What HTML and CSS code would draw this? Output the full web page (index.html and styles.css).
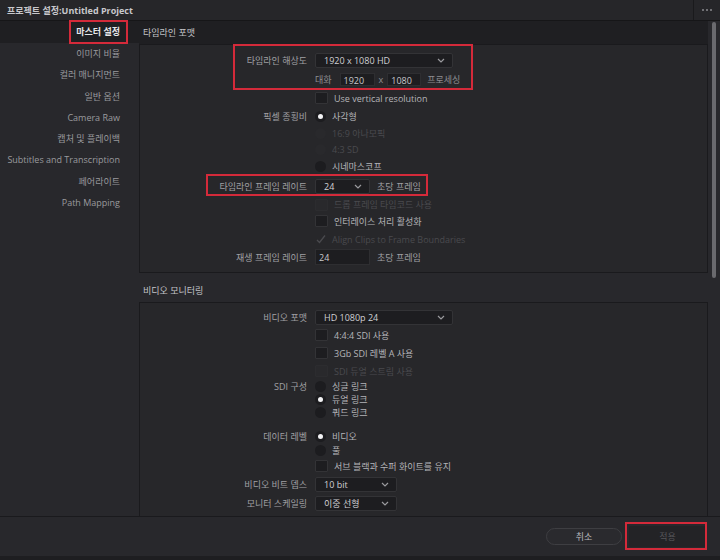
FILE: index.html
```html
<!DOCTYPE html>
<html lang="ko">

<head>
    <meta charset="UTF-8">
    <title>프로젝트 설정</title>
    <link rel="stylesheet" href="styles.css">
</head>

<body>
    <div class="win">
        <div class="titlebar">
            <span class="title">프로젝트 설정:Untitled Project</span>
            <span class="more"><i></i><i></i><i></i></span>
        </div>

        <div class="main">
            <nav class="side">
                <div class="nav-item sel">마스터 설정</div>
                <div class="nav-item">이미지 비율</div>
                <div class="nav-item">컬러 매니지먼트</div>
                <div class="nav-item">일반 옵션</div>
                <div class="nav-item">Camera Raw</div>
                <div class="nav-item">캡처 및 플레이백</div>
                <div class="nav-item">Subtitles and Transcription</div>
                <div class="nav-item">페어라이트</div>
                <div class="nav-item">Path Mapping</div>
            </nav>

            <div class="content">
                <div class="scroll">
                    <div class="sec-head first">타임라인 포맷</div>
                    <div class="box box1">
                        <div class="row h18">
                            <span class="lbl">타임라인 해상도</span>
                            <div class="select w138"><span>1920 x 1080 HD</span><svg width="8" height="5" viewBox="0 0 8 5"><polyline points="1,1 4,4 7,1" fill="none" stroke="#9a9a9e" stroke-width="1.2"/></svg></div>
                        </div>
                        <div class="row h20">
                            <span class="lbl"></span>
                            <span class="dim-lbl">대화</span>
                            <span class="field w35">1920</span>
                            <span class="times">x</span>
                            <span class="field w34">1080</span>
                            <span class="dim-lbl">프로세싱</span>
                        </div>
                        <div class="row h18">
                            <span class="lbl"></span>
                            <span class="check"></span><span class="txt">Use vertical resolution</span>
                        </div>
                        <div class="row h18">
                            <span class="lbl">픽셀 종횡비</span>
                            <span class="radio on"></span><span class="txt">사각형</span>
                        </div>
                        <div class="row h16">
                            <span class="lbl"></span>
                            <span class="radio off"></span><span class="txt off">16:9 아나모픽</span>
                        </div>
                        <div class="row h16">
                            <span class="lbl"></span>
                            <span class="radio off"></span><span class="txt off">4:3 SD</span>
                        </div>
                        <div class="row h18">
                            <span class="lbl"></span>
                            <span class="radio"></span><span class="txt">시네마스코프</span>
                        </div>
                        <div class="row h22">
                            <span class="lbl">타임라인 프레임 레이트</span>
                            <div class="select w55"><span>24</span><svg width="8" height="5" viewBox="0 0 8 5"><polyline points="1,1 4,4 7,1" fill="none" stroke="#9a9a9e" stroke-width="1.2"/></svg></div>
                            <span class="unit">초당 프레임</span>
                        </div>
                        <div class="row h15">
                            <span class="lbl"></span>
                            <span class="check off"></span><span class="txt off">드롭 프레임 타임코드 사용</span>
                        </div>
                        <div class="row h18">
                            <span class="lbl"></span>
                            <span class="check"></span><span class="txt">인터레이스 처리 활성화</span>
                        </div>
                        <div class="row h18">
                            <span class="lbl"></span>
                            <span class="tick"><svg width="12" height="10" viewBox="0 0 12 10"><polyline points="2,6 4.5,8.5 10,1.5" fill="none" stroke="#4a4a4e" stroke-width="1.3"/></svg></span><span class="txt off">Align Clips to Frame Boundaries</span>
                        </div>
                        <div class="row h18">
                            <span class="lbl">재생 프레임 레이트</span>
                            <span class="field w55 tall">24</span>
                            <span class="unit">초당 프레임</span>
                        </div>
                    </div>

                    <div class="sec-head">비디오 모니터링</div>
                    <div class="box box2">
                        <div class="row h18">
                            <span class="lbl">비디오 포맷</span>
                            <div class="select w138"><span>HD 1080p 24</span><svg width="8" height="5" viewBox="0 0 8 5"><polyline points="1,1 4,4 7,1" fill="none" stroke="#9a9a9e" stroke-width="1.2"/></svg></div>
                        </div>
                        <div class="row h18">
                            <span class="lbl"></span>
                            <span class="check"></span><span class="txt">4:4:4 SDI 사용</span>
                        </div>
                        <div class="row h18">
                            <span class="lbl"></span>
                            <span class="check"></span><span class="txt">3Gb SDI 레벨 A 사용</span>
                        </div>
                        <div class="row h18">
                            <span class="lbl"></span>
                            <span class="check off"></span><span class="txt off">SDI 듀얼 스트림 사용</span>
                        </div>
                        <div class="row h13">
                            <span class="lbl">SDI 구성</span>
                            <span class="radio"></span><span class="txt">싱글 링크</span>
                        </div>
                        <div class="row h13">
                            <span class="lbl"></span>
                            <span class="radio on"></span><span class="txt">듀얼 링크</span>
                        </div>
                        <div class="row h12">
                            <span class="lbl"></span>
                            <span class="radio"></span><span class="txt">쿼드 링크</span>
                        </div>
                        <div class="row h14 gap-top">
                            <span class="lbl">데이터 레벨</span>
                            <span class="radio on"></span><span class="txt">비디오</span>
                        </div>
                        <div class="row h14">
                            <span class="lbl"></span>
                            <span class="radio"></span><span class="txt">풀</span>
                        </div>
                        <div class="row h18">
                            <span class="lbl"></span>
                            <span class="check"></span><span class="txt">서브 블랙과 수퍼 화이트를 유지</span>
                        </div>
                        <div class="row h19">
                            <span class="lbl">비디오 비트 뎁스</span>
                            <div class="select w82"><span>10 bit</span><svg width="8" height="5" viewBox="0 0 8 5"><polyline points="1,1 4,4 7,1" fill="none" stroke="#9a9a9e" stroke-width="1.2"/></svg></div>
                        </div>
                        <div class="row h19">
                            <span class="lbl">모니터 스케일링</span>
                            <div class="select w82"><span>이중 선형</span><svg width="8" height="5" viewBox="0 0 8 5"><polyline points="1,1 4,4 7,1" fill="none" stroke="#9a9a9e" stroke-width="1.2"/></svg></div>
                        </div>
                        <div class="row h18 hidden-row">
                            <span class="lbl"></span>
                            <span class="radio"></span>
                        </div>
                    </div>
                </div>
                <div class="vbar"><div class="thumb"></div></div>
            </div>
        </div>

        <div class="footer">
            <button class="btn">취소</button>
            <button class="btn apply">적용</button>
        </div>

        <!-- red highlight boxes drawn over the screenshot -->
        <div class="mark m-nav"></div>
        <div class="mark m-res"></div>
        <div class="mark m-fps"></div>
        <div class="mark m-apply"></div>
    </div>
</body>

</html>
```

FILE: styles.css
```css
body {
    margin: 0;
    padding: 0;
    background-color: #28282c;
    font-family: "Open Sans", "Noto Sans CJK KR", sans-serif;
    font-size: 9px;
    color: #a0a0a4;
}

.win {
    position: relative;
    width: 720px;
    height: 560px;
    overflow: hidden;
    display: flex;
    flex-direction: column;
}

/* title bar */
.titlebar {
    height: 20px;
    display: flex;
    align-items: center;
    background-color: #262629;
    border-bottom: 1px solid #161618;
}

.title {
    flex: 1;
    padding-left: 7px;
    font-weight: 700;
    color: #c8c8cc;
}

.more {
    width: 26px;
    height: 20px;
    display: flex;
    align-items: center;
    justify-content: center;
    gap: 2px;
    border-left: 1px solid #1a1a1c;
}

.more i {
    width: 2px;
    height: 2px;
    border-radius: 50%;
    background-color: #8a8a8e;
}

/* body */
.main {
    height: 495px;
    display: flex;
}

.side {
    width: 120px;
    padding-right: 19px;
    background-color: #28282c;
}

.nav-item {
    height: 21.25px;
    line-height: 21.25px;
    text-align: right;
    white-space: nowrap;
    color: #9a9a9e;
}

.nav-item.sel {
    height: 22px;
    line-height: 22px;
    margin-right: -19px;
    padding-right: 19px;
    background-color: #1f1f22;
    color: #e6e6e8;
    font-weight: 700;
}

.content {
    flex: 1;
    display: flex;
    overflow: hidden;
}

.scroll {
    width: 569px;
    overflow: hidden;
}

.vbar {
    flex: 1;
    padding-left: 4px;
}

.thumb {
    width: 4px;
    height: 256px;
    margin-top: 1px;
    border-radius: 2px;
    background-color: #6a6a6e;
}

.sec-head {
    height: 23px;
    line-height: 23px;
    padding-left: 4px;
    margin-top: 6px;
    color: #c4c4c8;
}

.sec-head.first {
    margin-top: 0;
    background-color: #1f1f22;
}

.box {
    border: 1px solid #1a1a1d;
    background-color: #27272a;
}

.box1 {
    padding: 6px 0 6px;
}

.box2 {
    padding: 5px 0 20px;
}

/* form rows */
.row {
    display: flex;
    align-items: center;
    white-space: nowrap;
}

.h12 { height: 12px; }
.h13 { height: 13px; }
.h14 { height: 14px; }
.h15 { height: 15px; }
.h16 { height: 16px; }
.h18 { height: 18px; }
.h19 { height: 19px; }
.h20 { height: 20px; }
.h22 { height: 22px; }

.gap-top {
    margin-top: 11px;
}

.hidden-row {
    align-items: flex-start;
    padding-top: 4px;
}

.lbl {
    width: 167px;
    margin-right: 8px;
    text-align: right;
    color: #a0a0a4;
    flex-shrink: 0;
}

.txt {
    color: #b4b4b8;
}

.txt.off {
    color: #4a4a4e;
}

.dim-lbl {
    color: #8e8e92;
}

.unit {
    margin-left: 7px;
    color: #a0a0a4;
}

.select {
    height: 13px;
    display: flex;
    align-items: center;
    justify-content: space-between;
    padding: 0 7px 0 8px;
    background-color: #1d1d20;
    border: 1px solid #333336;
    border-radius: 2px;
    color: #d0d0d4;
    box-sizing: content-box;
}

.w138 { width: 121px; }
.w82 { width: 65px; }
.w55 { width: 38px; }

.field {
    height: 13px;
    line-height: 13px;
    padding-left: 3px;
    background-color: #1d1d20;
    border: 1px solid #2e2e31;
    color: #c8c8cc;
    box-sizing: border-box;
}

.field.w35 { width: 35px; margin-left: 8px; }
.field.w34 { width: 34px; }
.field.w55 { width: 55px; }
.field.tall { height: 16px; line-height: 16px; }

.times {
    margin: 0 4px;
    color: #8e8e92;
}

.field.w34 + .dim-lbl {
    margin-left: 6px;
}

.check {
    width: 11px;
    height: 10px;
    margin-right: 6px;
    background-color: #1d1d20;
    border: 1px solid #333336;
    border-radius: 1px;
}

.check.off {
    background-color: #29292c;
    border-color: #2c2c2f;
}

.tick {
    width: 13px;
    margin-right: 4px;
    display: flex;
}

.radio {
    width: 11px;
    height: 11px;
    margin-right: 6px;
    border-radius: 50%;
    background-color: #1c1c1f;
    display: flex;
    align-items: center;
    justify-content: center;
    flex-shrink: 0;
}

.radio.on::after {
    content: "";
    width: 5px;
    height: 5px;
    border-radius: 50%;
    background-color: #f2f2f4;
}

.radio.off {
    background-color: #29292c;
}

/* footer */
.footer {
    flex: 1;
    display: flex;
    align-items: center;
    justify-content: flex-end;
    gap: 7px;
    padding-right: 14px;
    border-top: 1px solid #1a1a1d;
    border-bottom: 4px solid #1e1e21;
    background-color: #28282c;
}

.btn {
    height: 17px;
    padding: 0;
    font-family: "Open Sans", "Noto Sans CJK KR", sans-serif;
    font-size: 9px;
    cursor: pointer;
}

.btn:first-child {
    width: 76px;
    border: 1px solid #3e3e42;
    border-radius: 9px;
    background-color: #2a2a2e;
    color: #b8b8bc;
}

.btn.apply {
    width: 77px;
    height: 21px;
    border: none;
    border-radius: 2px;
    background-color: #232326;
    color: #56565a;
}

/* annotations */
.mark {
    position: absolute;
    border: 2px solid #d42a3a;
    box-sizing: border-box;
}

.m-nav { left: 69px; top: 20px; width: 59px; height: 24px; }
.m-res { left: 233px; top: 44px; width: 240px; height: 46px; }
.m-fps { left: 206px; top: 174px; width: 222px; height: 22px; }
.m-apply { left: 625px; top: 522px; width: 82px; height: 28px; }
```
